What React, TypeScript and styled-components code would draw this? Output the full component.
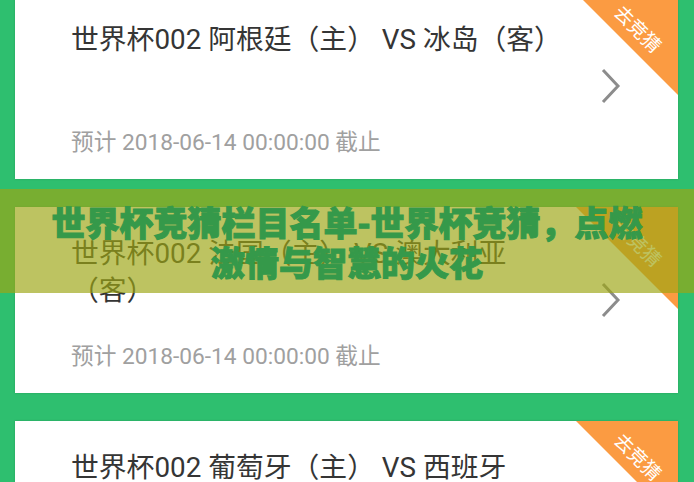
import styled, { createGlobalStyle } from 'styled-components';

const GlobalStyle = createGlobalStyle`
  html, body {
    margin: 0;
    padding: 0;
    background: #2ebf6f;
    overflow: hidden;
  }
  body {
    font-family: Roboto, "Noto Sans CJK SC", sans-serif;
  }
`;

const Page = styled.div`
  position: relative;
  width: 694px;
  height: 482px;
  overflow: hidden;
`;

const List = styled.div`
  display: flex;
  flex-direction: column;
  gap: 28px;
  margin-top: -7px;
  padding: 0 16px 0 15px;
`;

const Card = styled.div`
  position: relative;
  display: flex;
  height: 186px;
  background: #fff;
  box-shadow: 0 0 2px rgba(0, 0, 0, 0.18);
  overflow: hidden;
`;

const Info = styled.div`
  display: flex;
  flex-direction: column;
  width: 492px;
  padding: 28px 0 22px 56px;
`;

const Title = styled.div`
  font-size: 27.8px;
  line-height: 37px;
  color: #353535;
`;

const Deadline = styled.div`
  margin-top: auto;
  font-size: 22.7px;
  line-height: 28px;
  color: #a0a0a0;
`;

const Arrow = styled.svg`
  align-self: center;
  margin-left: auto;
  margin-right: 57px;
  flex-shrink: 0;
`;

const Corner = styled.div`
  position: absolute;
  top: 0;
  right: 0;
  width: 102px;
  height: 102px;
  background: #fb9b42;
  clip-path: polygon(0 0, 100% 0, 100% 100%);
`;

const CornerLabel = styled.span`
  position: absolute;
  left: 63px;
  top: 35px;
  transform: translate(-50%, -50%) rotate(45deg);
  font-family: "Noto Sans CJK SC", sans-serif;
  font-size: 19px;
  line-height: 1;
  color: #fff;
  white-space: nowrap;
`;

const Banner = styled.div`
  position: absolute;
  left: 0;
  right: 0;
  top: 189px;
  height: 104px;
  box-sizing: border-box;
  padding-top: 13px;
  background: rgba(157, 166, 20, 0.67);
  text-align: center;
`;

const Headline = styled.h1`
  margin: 0;
  font-family: "Noto Sans CJK SC", sans-serif;
  font-size: 34px;
  line-height: 40px;
  font-weight: 900;
  color: #35994a;
  -webkit-text-stroke: 1px #35994a;
`;

type Match = { id: number; home: string; away: string; time: string };

const matches: Match[] = [
  { id: 1, home: '阿根廷', away: '冰岛', time: '2018-06-14 00:00:00' },
  { id: 2, home: '法国', away: '澳大利亚', time: '2018-06-14 00:00:00' },
  { id: 3, home: '葡萄牙', away: '西班牙', time: '2018-06-14 00:00:00' },
];

const ChevronRight = () => (
  <Arrow width="20" height="36" viewBox="0 0 20 36">
    <polyline points="2,2 17,18 2,34" fill="none" stroke="#8c8c8c" strokeWidth="3" />
  </Arrow>
);

const MatchCard = ({ match }: { match: Match }) => (
  <Card>
    <Info>
      <Title>{`世界杯002 ${match.home}（主） VS ${match.away}（客）`}</Title>
      <Deadline>{`预计 ${match.time} 截止`}</Deadline>
    </Info>
    <ChevronRight />
    <Corner>
      <CornerLabel>去竞猜</CornerLabel>
    </Corner>
  </Card>
);

const App = () => (
  <Page>
    <GlobalStyle />
    <List>
      {matches.map((m) => <MatchCard key={m.id} match={m} />)}
    </List>
    <Banner>
      <Headline>
        世界杯竞猜栏目名单-世界杯竞猜，点燃
        <br />
        激情与智慧的火花
      </Headline>
    </Banner>
  </Page>
);

export default App;
